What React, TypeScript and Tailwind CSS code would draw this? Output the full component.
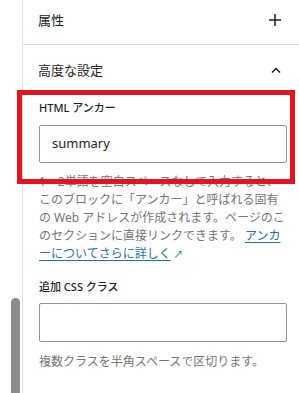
import React from "react";

const font = { fontFamily: '"Noto Sans", "Noto Sans CJK JP", sans-serif' };

export default function App() {
  return (
    <div
      className="relative w-[299px] h-[393px] overflow-hidden bg-white flex text-[#1e1e1e]"
      style={font}
    >
      {/* gutter with scrollbar */}
      <div className="w-[22px] flex flex-col pt-[298px]">
        <div className="ml-[11px] w-[9px] flex-1 rounded-t-full bg-[#8c8c8c]" />
      </div>

      {/* panel */}
      <div className="flex-1 border-l border-[#e0e0e0] flex flex-col">
        {/* 属性 */}
        <div className="h-[45px] border-b border-[#e0e0e0] pb-[4px] pl-[15px] pr-[17px] flex items-center justify-between">
          <span className="text-[13px] font-normal leading-none">属性</span>
          <svg width="14" height="14" viewBox="0 0 14 14" className="text-[#1e1e1e]">
            <path d="M7 1v12M1 7h12" stroke="currentColor" strokeWidth="1.5" />
          </svg>
        </div>

        {/* 高度な設定 */}
        <div className="h-[50px] pl-[15px] pr-[17px] flex items-center justify-between">
          <span className="text-[13px] font-normal leading-none">高度な設定</span>
          <svg width="12" height="8" viewBox="0 0 12 8" className="text-[#1e1e1e]">
            <path d="M2 6.5L6 2.5l4 4" fill="none" stroke="currentColor" strokeWidth="1.5" />
          </svg>
        </div>

        <div className="pl-[16px] pr-[12px] flex flex-col">
          <div className="mt-[5px] text-[11px] font-medium leading-[16px] uppercase">HTML アンカー</div>
          <div className="mt-[9px] h-[38px] border border-[#949494] rounded-[2px] flex items-center pl-[12px] text-[13px]">
            summary
          </div>
          <div className="mt-[10px] text-[12px] leading-[18px] text-[#757575] whitespace-nowrap">
            1～2単語を空白スペースなしで入力すると、
            <br />
            このブロックに「アンカー」と呼ばれる固有
            <br />
            の Web アドレスが作成されます。ページのこ
            <br />
            のセクションに直接リンクできます。{" "}
            <span className="text-[#2271b1] underline underline-offset-2">アンカ</span>
            <br />
            <span className="text-[#2271b1] underline underline-offset-2">ーについてさらに詳しく</span>
            <span className="text-[#2271b1] text-[10px]"> ↗</span>
          </div>

          <div className="mt-[16px] text-[11px] font-medium leading-[16px] uppercase">追加 CSS クラス</div>
          <div className="mt-[8px] h-[39px] border border-[#949494] rounded-[2px]" />
          <div className="mt-[11px] text-[12px] leading-[18px] text-[#757575] whitespace-nowrap">
            複数クラスを半角スペースで区切ります。
          </div>
        </div>
      </div>

      {/* red highlight box */}
      <div className="absolute left-[17px] top-[90px] w-[278px] h-[94px] border-[5px] border-[#e3141f] pointer-events-none" />
    </div>
  );
}
